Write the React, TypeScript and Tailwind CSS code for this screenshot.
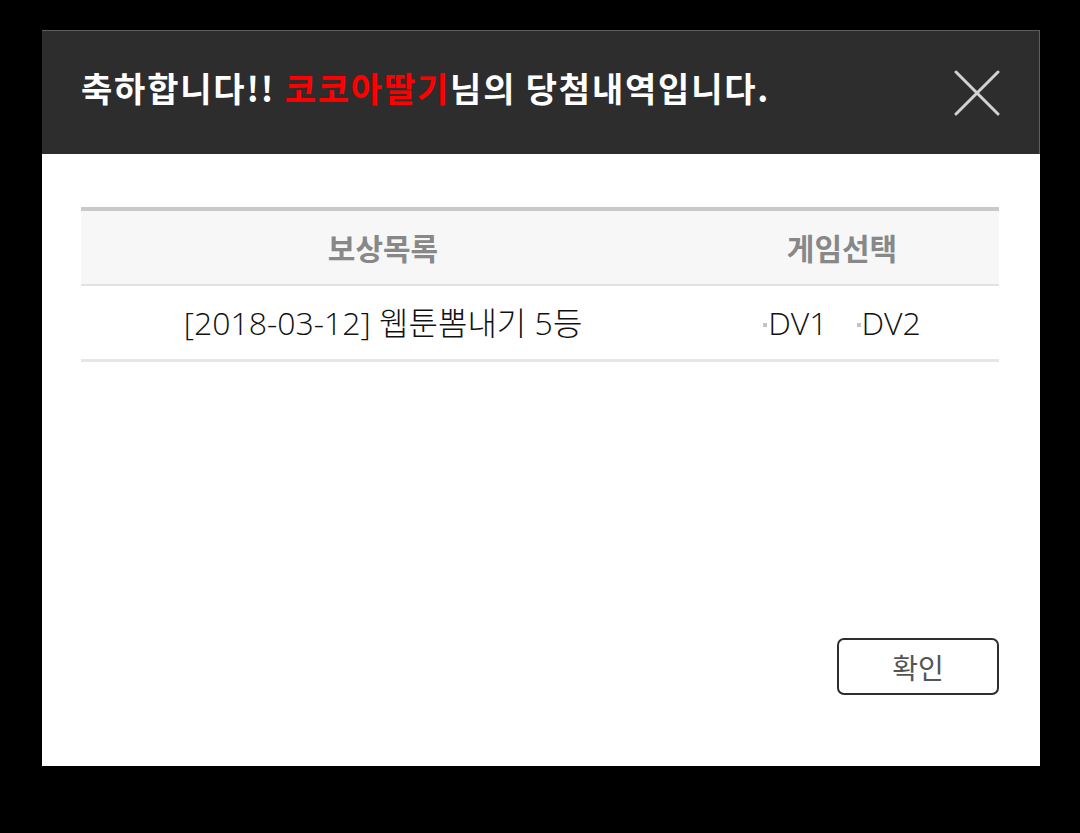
import React from "react";

const rows = [
  { title: "[2018-03-12] 웹툰뽐내기 5등", games: ["DV1", "DV2"] },
];

const App = () => {
  return (
    <div
      className="min-h-[833px] w-[1080px] bg-black pt-[30px] pl-[42px]"
      style={{ fontFamily: '"Open Sans", "Noto Sans CJK KR", sans-serif' }}
    >
      <div className="w-[998px] h-[736px] bg-white flex flex-col">
        <div className="h-[124px] bg-[#2d2d2d] border-t border-r border-[#5e5e5e] flex items-center justify-between pl-[39px] pr-[38px]">
          <h1
            className="text-[34px] font-bold text-white leading-none tracking-[1.8px] mb-[10px]"
            style={{ fontFamily: '"Noto Sans CJK KR", sans-serif' }}
          >
            축하합니다!! <span className="text-[#ff0000]">코코아딸기</span>님의 당첨내역입니다.
          </h1>
          <button className="w-[48px] h-[48px] flex items-center justify-center">
            <svg width="46" height="46" viewBox="0 0 46 46">
              <path
                d="M2 2 L44 44 M44 2 L2 44"
                stroke="#d2d2d2"
                strokeWidth="3"
                strokeLinecap="round"
              />
            </svg>
          </button>
        </div>

        <div className="flex-1 flex flex-col pl-[39px] pr-[41px] pt-[53px]">
          <div className="border-t-[4px] border-[#c9c9c9]">
            <div
              className="flex h-[75px] bg-[#f7f7f7] border-b-[2px] border-[#e2e2e2] items-center text-[30px] font-bold text-[#888888]"
              style={{ fontFamily: '"Noto Sans CJK KR", sans-serif' }}
            >
              <div className="w-[604px] text-center">보상목록</div>
              <div className="flex-1 text-center">게임선택</div>
            </div>
            {rows.map((r) => (
              <div
                key={r.title}
                className="flex h-[76px] border-b-[3px] border-[#e6e6e6] items-center text-[32px] font-light text-[#111111]"
              >
                <div className="w-[604px] text-center">{r.title}</div>
                <div className="flex-1 flex justify-center items-center gap-[29px]">
                  {r.games.map((g) => (
                    <span key={g} className="flex items-center">
                      <span className="w-[4px] h-[4px] bg-[#c4c4c4] mr-[1px] mt-[4px]" />
                      {g}
                    </span>
                  ))}
                </div>
              </div>
            ))}
          </div>

          <div className="flex justify-end mt-[276px]">
            <button
              className="w-[162px] h-[57px] border-2 border-[#2e2e2e] rounded-[7px] text-[28px] text-[#555555] flex items-center justify-center"
              style={{ fontFamily: '"Noto Sans CJK KR", sans-serif' }}
            >
              확인
            </button>
          </div>
        </div>
      </div>
    </div>
  );
};

export default App;
